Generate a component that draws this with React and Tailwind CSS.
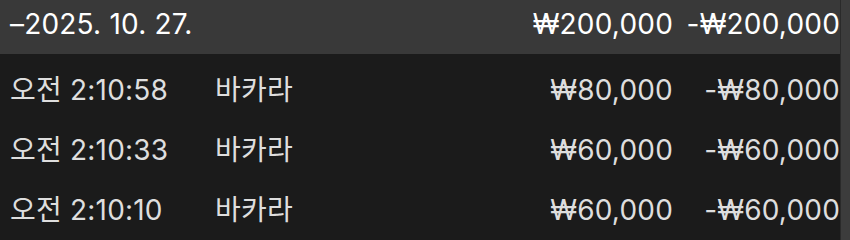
import React from 'react';

const rows = [
    { time: '오전 2:10:58', game: '바카라', amount: '₩80,000', net: '-₩80,000' },
    { time: '오전 2:10:33', game: '바카라', amount: '₩60,000', net: '-₩60,000' },
    { time: '오전 2:10:10', game: '바카라', amount: '₩60,000', net: '-₩60,000' },
];

export default function App() {
    return (
        <div className="flex w-[850px] h-[240px] overflow-hidden bg-[#1b1b1b] font-['Inter','Noto_Sans_CJK_KR',sans-serif] text-[28px] tracking-[0.2px]">
            <div className="flex-1 flex flex-col">
                {/* 날짜 헤더 */}
                <div className="flex items-center h-[54px] pb-[7px] pl-[10px] bg-[#393939] text-white">
                    <span className="flex-1">–2025. 10. 27.</span>
                    <span className="w-[160px] text-right">₩200,000</span>
                    <span className="w-[167px] text-right">-₩200,000</span>
                </div>

                <div className="pt-[6px]">
                    {rows.map((r, i) => (
                        <div key={i} className="flex items-center h-[60px] pl-[10px] text-[#dedede]">
                            <span className="w-[205px]">{r.time}</span>
                            <span className="flex-1">{r.game}</span>
                            <span className="w-[160px] text-right">{r.amount}</span>
                            <span className="w-[167px] text-right">{r.net}</span>
                        </div>
                    ))}
                </div>
            </div>

            {/* scrollbar */}
            <div className="w-[10px] h-full bg-[#3c3c3c] border-l border-[#2a2a2a]" />
        </div>
    );
}
